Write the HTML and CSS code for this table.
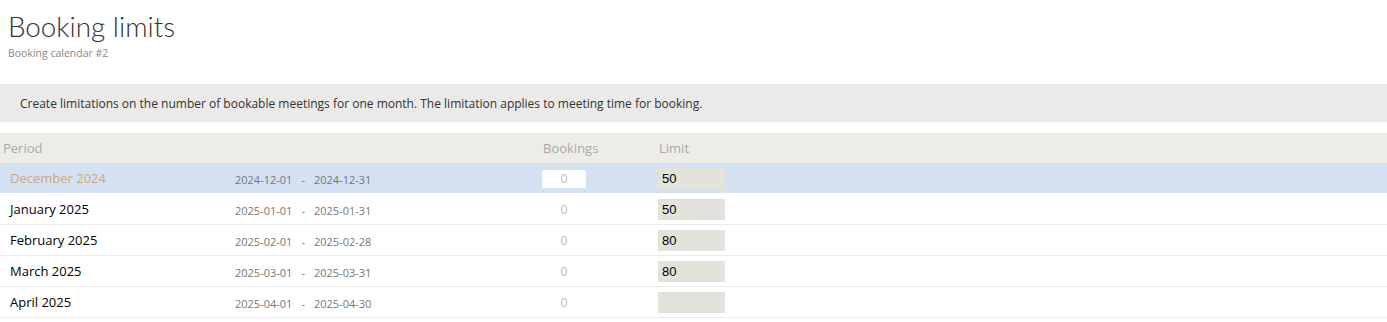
FILE: index.html
```html
<!DOCTYPE html>
<html lang="en">
<head>
<meta charset="utf-8">
<title>Booking limits</title>
<link rel="stylesheet" href="styles.css">
</head>
<body>
<header class="page-head">
  <h1 class="title">Booking limits</h1>
  <div class="subtitle">Booking calendar #2</div>
</header>
<div class="info">Create limitations on the number of bookable meetings for one month. The limitation applies to meeting time for booking.</div>
<div class="table">
  <div class="row head">
    <div class="c-name">Period</div>
    <div class="c-dates"></div>
    <div class="c-book">Bookings</div>
    <div class="c-limit">Limit</div>
  </div>
  <div class="row current">
    <div class="c-name">December 2024</div>
    <div class="c-dates"><span>2024-12-01</span><span class="dash">-</span><span>2024-12-31</span></div>
    <div class="c-book"><span class="count">0</span></div>
    <div class="c-limit"><span class="limit">50</span></div>
  </div>
  <div class="row">
    <div class="c-name">January 2025</div>
    <div class="c-dates"><span>2025-01-01</span><span class="dash">-</span><span>2025-01-31</span></div>
    <div class="c-book"><span class="count">0</span></div>
    <div class="c-limit"><span class="limit">50</span></div>
  </div>
  <div class="row">
    <div class="c-name">February 2025</div>
    <div class="c-dates"><span>2025-02-01</span><span class="dash">-</span><span>2025-02-28</span></div>
    <div class="c-book"><span class="count">0</span></div>
    <div class="c-limit"><span class="limit">80</span></div>
  </div>
  <div class="row">
    <div class="c-name">March 2025</div>
    <div class="c-dates"><span>2025-03-01</span><span class="dash">-</span><span>2025-03-31</span></div>
    <div class="c-book"><span class="count">0</span></div>
    <div class="c-limit"><span class="limit">80</span></div>
  </div>
  <div class="row">
    <div class="c-name">April 2025</div>
    <div class="c-dates"><span>2025-04-01</span><span class="dash">-</span><span>2025-04-30</span></div>
    <div class="c-book"><span class="count">0</span></div>
    <div class="c-limit"><span class="limit"></span></div>
  </div>
</div>
</body>
</html>
```
FILE: styles.css
```css
* { box-sizing: border-box; }
html, body { margin: 0; padding: 0; background: #fff; }
body {
  font-family: "Open Sans", "Noto Sans", sans-serif;
  color: #333;
}
.page-head { padding: 10px 0 0 8px; height: 84px; }
.title {
  margin: 0;
  font-family: Lato, sans-serif;
  font-weight: 300;
  font-size: 27.8px;
  line-height: 34px;
  color: #333;
}
.subtitle {
  margin-top: 2px;
  font-size: 10.5px;
  color: #888;
}
.info {
  background: #ebeae8;
  height: 38px;
  padding: 0 20px;
  display: flex;
  align-items: center;
  font-size: 12px;
  color: #333;
}
.table { margin-top: 11px; }
.row {
  display: grid;
  grid-template-columns: 235px 307px 116px 1fr;
  align-items: center;
  height: 31px;
  border-bottom: 1px solid #ebebeb;
  font-size: 13px;
  color: #000;
}
.row.head {
  height: 30px;
  background: #edede8;
  border-bottom: none;
  color: #aaa;
}
.row.current { background: #d3e1f2; height: 31px; border-bottom: 1px solid #fff; }
.row .c-name { padding-left: 10px; }
.row.head .c-name { padding-left: 3px; }
.row.head .c-book { padding-left: 1px; }
.row.head .c-limit { padding-left: 1px; }
.row.current .c-name { color: #d0a976; }
.c-dates { font-size: 11px; color: #777; padding-top: 3px; }
.dash { margin: 0 9px; }
.count {
  display: inline-block;
  width: 44px;
  height: 18px;
  line-height: 18px;
  text-align: center;
  color: #bbb;
  border-radius: 2px;
  font-size: 12.5px;
}
.row.current .count { background: #fff; }
.limit {
  display: block;
  width: 67px;
  height: 21px;
  line-height: 21px;
  padding-left: 4px;
  background: #e3e3dc;
  font-family: "Liberation Sans", Arial, sans-serif;
  font-size: 13px;
  color: #000;
}
```
